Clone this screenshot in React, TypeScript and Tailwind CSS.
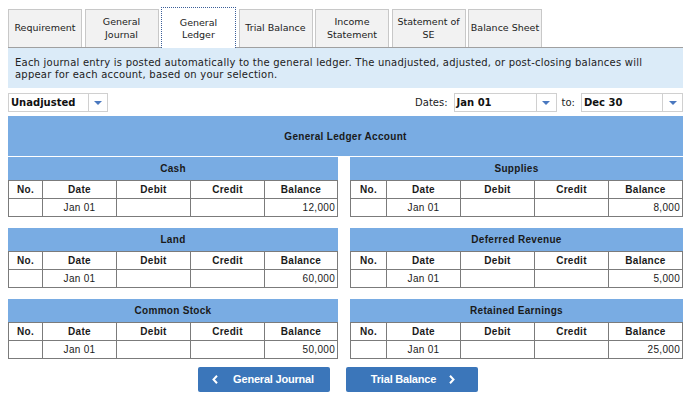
import React from "react";

const tabs = [
  { label: ["Requirement"] },
  { label: ["General", "Journal"] },
  { label: ["General", "Ledger"], active: true },
  { label: ["Trial Balance"] },
  { label: ["Income", "Statement"] },
  { label: ["Statement of", "SE"] },
  { label: ["Balance Sheet"] },
];

const accounts = [
  { name: "Cash", balance: "12,000" },
  { name: "Supplies", balance: "8,000" },
  { name: "Land", balance: "60,000" },
  { name: "Deferred Revenue", balance: "5,000" },
  { name: "Common Stock", balance: "50,000" },
  { name: "Retained Earnings", balance: "25,000" },
];

function Arrow() {
  return (
    <svg width="8" height="4" viewBox="0 0 8 4">
      <polygon points="0,0 8,0 4,4" fill="#4a78bf" />
    </svg>
  );
}

function Select({ value, width, arrowWidth }: { value: string; width: string; arrowWidth: string }) {
  return (
    <div className={`flex h-[19px] ${width} border border-[#d0d0d0] bg-white`}>
      <div className="flex flex-1 items-center pl-[2px] text-[10px] font-bold text-[#111]">{value}</div>
      <div className={`flex ${arrowWidth} items-center justify-center border-l border-[#d0d0d0]`}>
        <Arrow />
      </div>
    </div>
  );
}

function Account({ name, balance, right }: { name: string; balance: string; right: boolean }) {
  const cols = right ? "grid-cols-[36px_74px_74px_74px_1fr]" : "grid-cols-[34px_74px_74px_74px_1fr]";
  const cell = "flex items-center border-r border-[#7b7b7b]";
  return (
    <div className="font-['Liberation_Sans',Arial,sans-serif] text-[10px] text-[#1a1a1a]">
      <div className="flex h-[23px] items-center justify-center bg-[#79ace3] font-bold tracking-[0.3px]">{name}</div>
      <div className="border-x border-b border-[#7b7b7b] bg-white">
        <div className={`grid h-[18px] ${cols} border-t border-[#7b7b7b] font-bold tracking-[0.3px]`}>
          <div className={`${cell} justify-center`}>No.</div>
          <div className={`${cell} justify-center`}>Date</div>
          <div className={`${cell} justify-center`}>Debit</div>
          <div className={`${cell} justify-center`}>Credit</div>
          <div className="flex items-center justify-center">Balance</div>
        </div>
        <div className={`grid h-[18px] ${cols} border-t border-[#7b7b7b] tracking-[0.3px]`}>
          <div className={cell}></div>
          <div className={`${cell} justify-center`}>Jan 01</div>
          <div className={cell}></div>
          <div className={cell}></div>
          <div className="flex items-center justify-end pr-[2px]">{balance}</div>
        </div>
      </div>
    </div>
  );
}

function Chevron({ dir }: { dir: "left" | "right" }) {
  return (
    <svg width="6" height="9" viewBox="0 0 6 9">
      <polyline
        points={dir === "left" ? "5,0.8 1.5,4.5 5,8.2" : "1,0.8 4.5,4.5 1,8.2"}
        fill="none"
        stroke="white"
        strokeWidth="2"
      />
    </svg>
  );
}

export default function App() {
  return (
    <div className="h-[398px] w-[696px] bg-white font-['DejaVu_Sans',Verdana,sans-serif] text-[#222]">
      <div className="ml-[8px] w-[675px]">
        {/* tabs */}
        <div className="flex items-end gap-[2.5px] pt-[7px]">
          {tabs.map((t) =>
            t.active ? (
              <div
                key={t.label.join(" ")}
                className="relative z-10 -mb-px flex h-[41px] w-[75px] flex-col items-center justify-center border border-b-0 border-dotted border-[#3b5f99] bg-white pt-[2px] text-[9.5px] leading-[12.5px]"
              >
                {t.label.map((l) => (
                  <span key={l}>{l}</span>
                ))}
              </div>
            ) : (
              <div
                key={t.label.join(" ")}
                className="flex h-[38px] w-[74px] flex-col items-center justify-center border border-b-0 border-[#c8c8c8] bg-[#f2f2f2] text-[9.5px] leading-[12.5px]"
              >
                {t.label.map((l) => (
                  <span key={l}>{l}</span>
                ))}
              </div>
            )
          )}
        </div>

        {/* info */}
        <div className="border-t border-[#a0a0a0] bg-[#dbebf8] px-[7px] pb-[7px] pt-[9px] text-[10px] leading-[12px] tracking-[0.22px] text-[#222]">
          Each journal entry is posted automatically to the general ledger. The unadjusted, adjusted, or post-closing balances will
          <br />
          appear for each account, based on your selection.
        </div>

        {/* selects */}
        <div className="mt-[5px] flex items-center justify-between">
          <Select value="Unadjusted" width="w-[100px]" arrowWidth="w-[19px]" />
          <div className="flex items-center text-[10px]">
            <span className="mr-[6px]">Dates:</span>
            <Select value="Jan 01" width="w-[103px]" arrowWidth="w-[20px]" />
            <span className="ml-[5px] mr-[6px]">to:</span>
            <Select value="Dec 30" width="w-[102px]" arrowWidth="w-[20px]" />
          </div>
        </div>

        <div className="mt-[4px] flex h-[40px] items-center justify-center bg-[#79ace3] font-['Liberation_Sans',Arial,sans-serif] text-[10px] font-bold tracking-[0.3px] text-[#1a1a1a]">
          General Ledger Account
        </div>

        <div className="mt-px grid grid-cols-[330px_333px] gap-x-[12px] gap-y-[11px]">
          {accounts.map((a, i) => (
            <Account key={a.name} name={a.name} balance={a.balance} right={i % 2 === 1} />
          ))}
        </div>

        <div className="ml-[190px] mt-[8px] flex gap-[16px] font-['Liberation_Sans',Arial,sans-serif] text-[11px] font-bold tracking-[-0.2px] text-white">
          <button className="flex h-[25px] w-[132px] items-center justify-center gap-[15px] rounded-[2px] bg-[#3b76ba] pr-[2px]">
            <Chevron dir="left" />
            <span>General Journal</span>
          </button>
          <button className="flex h-[25px] w-[132px] items-center justify-center gap-[13px] rounded-[2px] bg-[#3b76ba] pl-[2px]">
            <span>Trial Balance</span>
            <Chevron dir="right" />
          </button>
        </div>
      </div>
    </div>
  );
}
